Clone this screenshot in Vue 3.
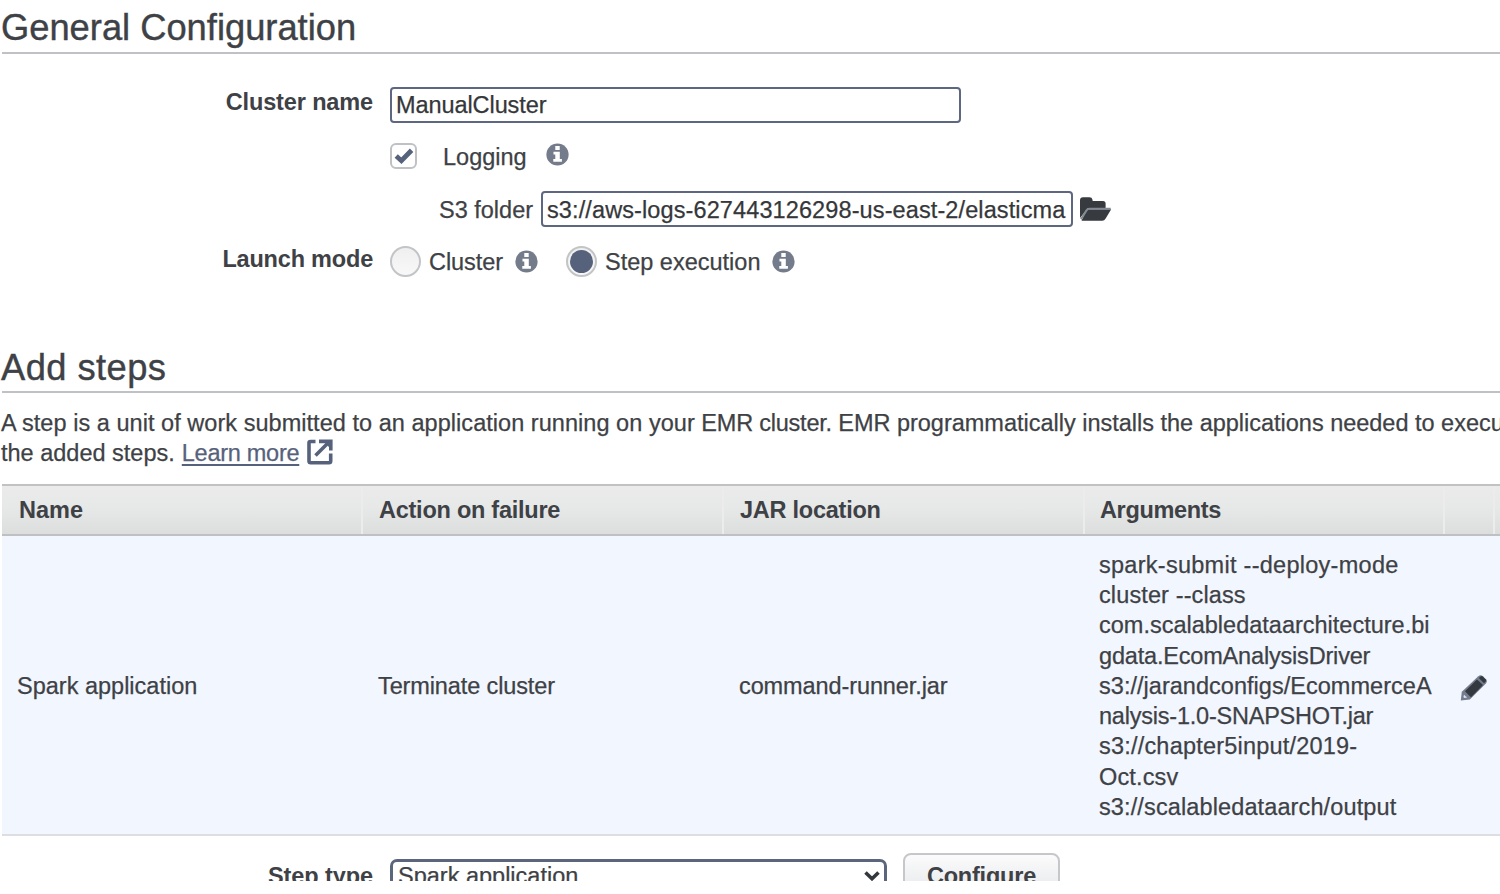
<script setup>
const columns = ['Name', 'Action on failure', 'JAR location', 'Arguments', '', '']
const argLines = [
  'spark-submit --deploy-mode',
  'cluster --class',
  'com.scalabledataarchitecture.bi',
  'gdata.EcomAnalysisDriver',
  's3://jarandconfigs/EcommerceA',
  'nalysis-1.0-SNAPSHOT.jar',
  's3://chapter5input/2019-',
  'Oct.csv',
  's3://scalabledataarch/output',
]
</script>

<template>
  <div class="page">
    <svg class="defs" width="0" height="0">
      <symbol id="info" viewBox="0 0 24 24">
        <circle cx="12" cy="12" r="11.6" fill="#747b8a" />
        <path d="M9.700 3.200h4.600v4H9.700zM7.800 9.200h6.600v7.400h2.200v2.900H7.600v-2.900h2.100v-4.700H7.800z" fill="#fff" />
      </symbol>
    </svg>

    <h1 class="heading first"><span class="t-general">General Configuration</span></h1>

    <div class="row name-row">
      <div class="label"><span class="t-cname">Cluster name</span></div>
      <div class="input name-input"><span class="t-manual">ManualCluster</span></div>
    </div>

    <div class="row log-row">
      <span class="checkbox">
        <svg width="20" height="18" viewBox="0 0 20 18"><path d="M2.200 9l5.200 4.700L17.600 3.300" fill="none" stroke="#56627b" stroke-width="4.800" /></svg>
      </span>
      <span class="log-text t-logging">Logging</span>
      <svg class="info log-info"><use href="#info" /></svg>
    </div>

    <div class="row folder-row">
      <span class="s3-label t-s3">S3 folder</span>
      <div class="input s3-input"><span class="t-aws">s3://aws-logs-627443126298-us-east-2/elasticma</span></div>
      <svg class="folder" width="33" height="26" viewBox="0 0 33 26">
        <path d="M1 22V4.200Q1 1.200 4 1.200h6.500Q13 1.200 13.400 3.600l.3 1.400H24q2.600 0 2.600 2.600V12H9z" fill="#373a3e" />
        <path d="M9 13.200h23.200l-5.700 9.600q-1.100 2-3.200 2H2.500l4.800-10.100Q8 13.200 9 13.200z" fill="#373a3e" />
        <path d="M2 23.200l5.500-8.800q1-1.700 2.800-1.700h21.400" fill="none" stroke="#848a94" stroke-width="2" />
      </svg>
    </div>

    <div class="row mode-row">
      <div class="label mode-label"><span class="t-launch">Launch mode</span></div>
      <span class="radio"></span>
      <span class="mode-text t-cluster">Cluster</span>
      <svg class="info"><use href="#info" /></svg>
      <span class="radio second"><i></i></span>
      <span class="mode-text t-stepex">Step execution</span>
      <svg class="info"><use href="#info" /></svg>
    </div>

    <h1 class="heading steps"><span class="t-add">Add steps</span></h1>
    <div class="intro">
      <div class="t-p1"><span class="p1a">A step is a unit of work submitted to an application running on your </span><span class="p1b">EMR cluster. </span>EMR programmatically installs the applications needed to execu</div>
      <div class="line2">
        <span class="t-p2">the added steps.</span>
        <a class="t-learn">Learn more</a>
        <svg width="26" height="26" viewBox="0 0 26 26" fill="none" stroke="#56627b">
          <path d="M8.500 2.500H3.500q-1.500 0-1.500 1.500V22q0 1.800 1.800 1.800H22q1.700 0 1.700-1.700V14.500" stroke-width="3.600" />
          <path d="M8.500 16.500L22 3" stroke-width="3.600" />
          <path d="M12 .6H25.600V11.500h-3.600V8L18 4.200H12z" fill="#56627b" stroke="none" />
        </svg>
      </div>
    </div>

    <div class="table">
      <div class="thead">
        <div v-for="(c, i) in columns" :key="i" :class="['th', 'h' + i]"><span>{{ c }}</span></div>
      </div>
      <div class="tbody">
        <div class="td"><span class="t-spark">Spark application</span></div>
        <div class="td"><span class="t-term">Terminate cluster</span></div>
        <div class="td"><span class="t-jar">command-runner.jar</span></div>
        <div class="td args">
          <div v-for="(l, i) in argLines" :key="i"><span :class="'a' + i">{{ l }}</span></div>
        </div>
        <div class="td edit">
          <svg width="28" height="28" viewBox="0 0 28 28">
            <path d="M.8 26.600l1-8.800L18.300 2.300q2.200-1.900 4.300-.2l3.300 3.200q1.900 2 0 4.200L9.800 25.500z" fill="#747c8e" />
            <path d="M5 17.200L17 5.400l6 5.600L11 23.200l-2.600-2.400z" fill="#34383f" />
            <path d="M18.800 3.900l1.900-1.500q1.100-.7 2 .1l2.900 2.800q1 1.100.1 2.300L24 9.200z" fill="#34383f" />
            <path d="M4 20.700l3.200 2.900-2.800.5-1-1z" fill="#dbe1ec" />
          </svg>
        </div>
        <div class="td"></div>
      </div>
    </div>

    <div class="row type-row">
      <div class="label"><span class="t-type">Step type</span></div>
      <div class="select">
        <span class="t-sel">Spark application</span>
        <svg width="18" height="14" viewBox="0 0 18 14"><path d="M2.500 3.500L9 9.700l6.500-6.200" fill="none" stroke="#34383d" stroke-width="3.600" /></svg>
      </div>
      <div class="button"><span class="t-conf">Configure</span></div>
    </div>
  </div>
</template>

<style>
html,
body {
  background: #fff;
  overflow: hidden;
}
</style>

<style scoped>
.page {
  width: 1500px;
  height: 881px;
  overflow: hidden;
  font-family: "Liberation Sans", Arial, sans-serif;
  font-size: 23.5px;
  line-height: 30px;
  color: #3e4145;
  white-space: nowrap;
  -webkit-text-stroke: 0.25px currentColor;
}
.page * {
  box-sizing: border-box;
}
.defs {
  display: block;
}
.heading {
  margin: 0 0 0 2px;
  font-weight: 400;
  font-size: 36.3px;
  line-height: 42px;
  border-bottom: 2px solid #bfc1c4;
  -webkit-text-stroke-width: 0.4px;
}
.heading span {
  margin-left: -1px;
}
.heading .t-add {
  margin-left: -1px;
  letter-spacing: 0.45px;
}
.first {
  height: 54px;
  padding-top: 7px;
}
.row {
  display: flex;
}
.label {
  width: 373px;
  margin-right: 17px;
  text-align: right;
  font-weight: 700;
}
.label,
.button,
.thead {
  -webkit-text-stroke-width: 0;
}
.t-cname {
  letter-spacing: -0.13px;
}
.name-row {
  margin-top: 33px;
}
.input {
  height: 36px;
  border: 2px solid #5d6880;
  border-radius: 4px;
  padding: 1px 0 0 4px;
  color: #35373a;
}
.t-manual {
  letter-spacing: -0.08px;
}
.t-aws {
  letter-spacing: 0.11px;
}
.name-input {
  width: 571px;
}
.log-row {
  height: 26px;
  margin: 20px 0 0 390px;
}
.checkbox {
  width: 27px;
  height: 26px;
  border: 2px solid #bfc1c5;
  border-radius: 6px;
  display: flex;
  align-items: center;
  justify-content: center;
}
.checkbox svg {
  flex: none;
}
.log-text {
  width: 84px;
  margin-left: 26px;
  line-height: 28px;
}
.info {
  width: 23px;
  height: 23px;
  flex: none;
}
.log-info {
  margin-left: 19px;
}
.folder-row {
  height: 36px;
  margin: 22px 0 0 439px;
}
.s3-label {
  width: 102px;
  line-height: 38px;
}
.s3-input {
  width: 532px;
  padding-top: 2px;
}
.folder {
  margin: 5px 0 0 6px;
}
.mode-row {
  margin-top: 18px;
  height: 32px;
  align-items: center;
}
.mode-label {
  height: 32px;
  line-height: 28px;
}
.t-launch {
  letter-spacing: -0.2px;
}
.radio {
  width: 31px;
  height: 31px;
  border: 2px solid #c3c4c6;
  border-radius: 50%;
  background: linear-gradient(#efeff0, #f8f8f9);
  display: flex;
  align-items: center;
  justify-content: center;
}
.radio i {
  width: 23px;
  height: 23px;
  border-radius: 50%;
  background: #56627b;
}
.second {
  margin-left: 28px;
}
.mode-text {
  margin-left: 8px;
  line-height: 34px;
}
.t-cluster {
  width: 86px;
  letter-spacing: -0.05px;
}
.t-stepex {
  width: 167px;
}
.mode-row .t-cluster,
.mode-row .t-stepex {
  padding-top: 1px;
}
.steps {
  margin-top: 69px;
  height: 47px;
  line-height: 43px;
}
.intro {
  margin: 15px 0 0 1px;
  height: 76px;
  line-height: 30px;
}
.t-p1 {
  margin-right: -1px;
  letter-spacing: -0.01px;
}
.p1a {
  letter-spacing: 0.04px;
}
.p1b {
  letter-spacing: -0.22px;
}
.line2 {
  display: flex;
}
.line2 a {
  margin-left: 7px;
  letter-spacing: -0.27px;
  color: #56627b;
  text-decoration: underline;
  text-decoration-thickness: 2px;
  text-underline-offset: 3px;
  text-decoration-skip-ink: none;
}
.line2 svg {
  margin: 1px 0 0 8px;
}
.table {
  margin-left: 2px;
}
.thead,
.tbody {
  display: grid;
  grid-template-columns: 361px 361px 361px 360px 50px 5px;
}
.thead {
  height: 52px;
  border-top: 2px solid #c1c2c3;
  border-bottom: 2px solid #bfc0c1;
  background: linear-gradient(#ebebec, #e7e8e8 45%, #dcdddd);
  font-weight: 700;
  line-height: 48px;
}
.th {
  padding-left: 16px;
  border-right: 2px solid #ececec;
}
.h0 {
  padding-left: 17px;
}
.h1,
.h2 {
  letter-spacing: -0.25px;
}
.h3 {
  padding-left: 15px;
  letter-spacing: -0.35px;
}
.th:last-child {
  border: 0;
}
.tbody {
  height: 300px;
  align-items: center;
  background: #f2f6fe;
  border-bottom: 2px solid #dcdedf;
}
.td {
  padding: 2px 0 0 14px;
}
.td:first-child {
  padding-left: 15px;
}
.t-term {
  margin-left: 1px;
  letter-spacing: -0.12px;
}
.t-jar {
  margin-left: 1px;
  letter-spacing: -0.1px;
}
.args {
  line-height: 30.2px;
}
.a0 { letter-spacing: 0.27px; }
.a1 { letter-spacing: 0.12px; }
.a3 { letter-spacing: -0.18px; }
.a4 { letter-spacing: 0.03px; }
.a5 { letter-spacing: -0.22px; }
.a6 { letter-spacing: 0.2px; }
.a7 { letter-spacing: 0.14px; }
.a8 { letter-spacing: 0.12px; }
.edit svg {
  display: block;
  margin: 4px 0 0 1px;
}
.type-row {
  margin-top: 17px;
}
.type-row .label {
  padding-top: 8px;
}
.t-type {
  letter-spacing: -0.08px;
}
.select {
  display: flex;
  justify-content: space-between;
  width: 497px;
  height: 42px;
  margin-top: 6px;
  padding: 0 3px 0 5px;
  line-height: 28px;
  border: 3px solid #5b667d;
  border-radius: 7px;
}
.select svg {
  margin-top: 7px;
}
.button {
  width: 157px;
  height: 46px;
  margin-left: 16px;
  padding-top: 6px;
  text-align: center;
  font-weight: 700;
  border: 2px solid #c6c7ca;
  border-radius: 8px;
  background: linear-gradient(#fbfbfc, #e5e6e7);
}
.t-conf {
  letter-spacing: -0.2px;
}
</style>
